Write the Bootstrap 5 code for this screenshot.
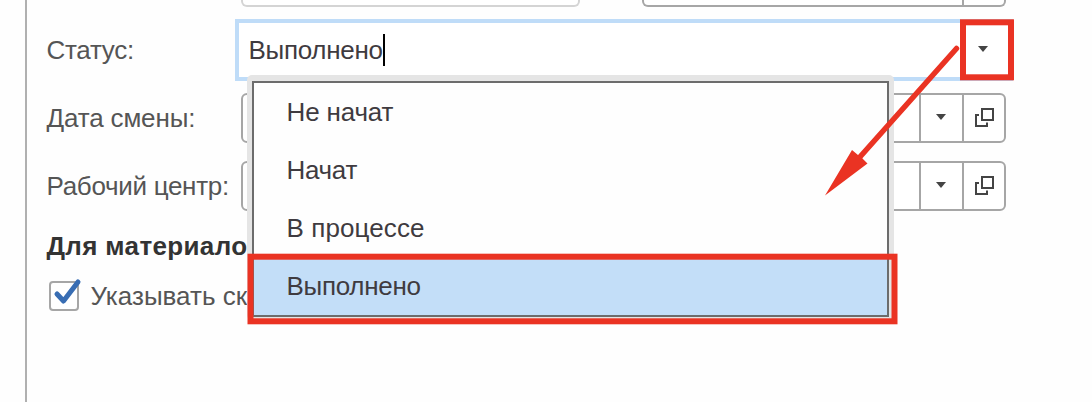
<!DOCTYPE html>
<html lang="ru">
<head>
<meta charset="utf-8">
<meta name="viewport" content="width=device-width, initial-scale=1">
<title>Статус</title>
<link href="https://cdn.jsdelivr.net/npm/bootstrap@5.3.0/dist/css/bootstrap.min.css" rel="stylesheet">
<style>
body{background:#fefefe;font-family:"Liberation Sans",Arial,sans-serif;font-size:26px;line-height:30px;color:#555;height:402px;overflow:hidden}
.pane{margin-left:24.5px;border-left:2px solid #b0b0b0;height:402px;padding-left:20px}
.line{height:50px}
.lbl{width:194px;flex:none;white-space:nowrap}
.t1{letter-spacing:-.15px}
.t2{letter-spacing:-.3px}
.t3{letter-spacing:.35px}
.t4{letter-spacing:.1px}
.fld{width:765.5px;height:50px;border:2px solid #a6a6a6;border-radius:6px;background:#fff}
.fld .cell{width:42.5px;border-left:2px solid #a6a6a6;display:flex;align-items:center;justify-content:center;padding-bottom:3px}
.cut{height:7px;border:2px solid #a6a6a6;border-top:0;border-radius:0 0 6px 6px;background:#fff}
.cut.off{border-color:#d4d4d4}
.focus-fld{margin-left:-6px;width:778px;height:62px;border:4px solid #bfdcf8;background:#fff;color:#3f3b40;padding-left:10px}
.caret-bar{width:2px;height:32px;background:#000}
.drop{margin-right:21px;margin-bottom:3px}
.chk{width:30px;height:30px;border:2px solid #a6a6a6;border-radius:4px;background:#fff}
.popup{left:247px;top:75px;width:647px;height:245px;background:#e5e5e5;border-radius:5px;padding:6px 5px 2px}
.popup .inner{border:2px solid #6c6c6c;height:236px;background:#fefefe;color:#3f3b40}
.opt{height:58px;padding:14px 0 0 32.5px}
.opt.sel{background:#c3def8}
.hd{color:#333;height:30px;font-weight:bold}
</style>
</head>
<body>
<main class="pane">
  <div class="d-flex">
    <div class="lbl"></div>
    <div class="cut off" style="width:339.5px"></div>
    <div class="cut d-flex justify-content-end" style="width:364px;margin-left:62px"><div style="width:42px;border-left:2px solid #a6a6a6"></div></div>
  </div>
  <div class="d-flex align-items-center" style="margin-top:12.3px">
    <div class="lbl"><span class="t2">Статус:</span></div>
    <div class="focus-fld d-flex align-items-center"><span class="t2">Выполнено</span><span class="caret-bar"></span>
      <svg class="ms-auto drop" width="10" height="6"><path d="M0 0H10L5 6Z" fill="#444"/></svg></div>
  </div>
  <div class="line d-flex align-items-center" style="margin-top:12px">
    <div class="lbl"><span class="t1">Дата смены:</span></div>
    <div class="fld d-flex justify-content-end">
      <div class="cell"><svg width="10" height="6"><path d="M0 0H10L5 6Z" fill="#444"/></svg></div>
      <div class="cell"><svg width="20" height="20" fill="none" stroke="#444" stroke-width="2"><path d="M8 2H19V13H8ZM5 8H2V19H13V15.500"/></svg></div>
    </div>
  </div>
  <div class="line d-flex align-items-center" style="margin-top:18px">
    <div class="lbl"><span class="t2">Рабочий центр:</span></div>
    <div class="fld d-flex justify-content-end">
      <div class="cell"><svg width="10" height="6"><path d="M0 0H10L5 6Z" fill="#444"/></svg></div>
      <div class="cell"><svg width="20" height="20" fill="none" stroke="#444" stroke-width="2"><path d="M8 2H19V13H8ZM5 8H2V19H13V15.500"/></svg></div>
    </div>
  </div>
  <div class="hd" style="margin-top:20px"><span class="t3">Для материало</span></div>
  <div class="d-flex align-items-center" style="margin-top:20px">
    <div class="chk" style="margin-left:2px"><svg class="overflow-visible d-block" width="26" height="26" fill="none" stroke="#386db3" stroke-width="5" stroke-linecap="round" stroke-linejoin="round"><path d="M6 11L12.500 18L27 -1"/></svg></div>
    <span style="margin-left:12px">Указывать ск</span>
  </div>
</main>
<div class="popup position-absolute">
  <div class="inner">
    <div class="opt"><span class="t1">Не начат</span></div>
    <div class="opt"><span class="t2">Начат</span></div>
    <div class="opt"><span class="t4">В процессе</span></div>
    <div class="opt sel"><span class="t2">Выполнено</span></div>
  </div>
</div>
<svg class="position-absolute top-0 start-0" width="1092" height="402" fill="none" stroke="#ea3323">
  <rect x="963" y="22.300" width="48" height="55" stroke-width="6"/>
  <rect x="250.500" y="256.700" width="644" height="64.600" stroke-width="6"/>
  <path d="M956.500 48.500L859 158" stroke-width="5.500" stroke-linecap="round"/>
  <path d="M825 195.500L852 150L858 155L862 158L867.500 163.500Z" fill="#ea3323" stroke="none"/>
</svg>
</body>
</html>
